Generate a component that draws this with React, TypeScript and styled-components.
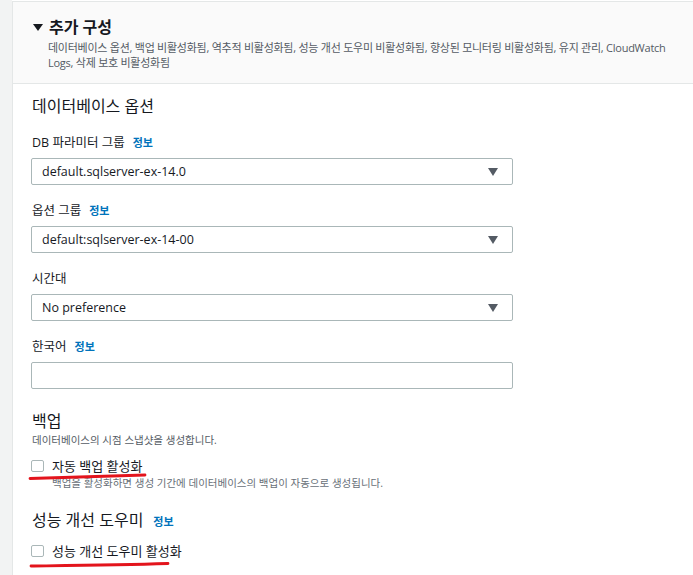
import React from "react";
import styled, { createGlobalStyle } from "styled-components";

const GlobalStyle = createGlobalStyle`
  html, body {
    margin: 0;
    padding: 0;
    background: #fff;
  }
  body {
    font-family: "Open Sans", "Noto Sans CJK KR", sans-serif;
    color: #16191f;
  }
`;

const Page = styled.div`
  display: flex;
  min-height: 575px;
  background: #fff;
`;

const Gutter = styled.div`
  width: 12px;
  flex-shrink: 0;
  background: #f2f3f3;
`;

const Panel = styled.section`
  flex: 1;
  border-left: 1px solid #e4e7e7;
  border-top: 1px solid #e4e7e7;
  margin-top: 1px;
`;

const Header = styled.div`
  background: #fafafa;
  border-bottom: 1px solid #e4e7e7;
  padding: 14px 0 14px 20px;
  height: 82px;
  box-sizing: border-box;
`;

const TitleRow = styled.div`
  display: flex;
  align-items: center;
  gap: 6px;
  height: 22px;
`;

const Caret = styled.span`
  width: 0;
  height: 0;
  border-left: 5px solid transparent;
  border-right: 5px solid transparent;
  border-top: 7px solid #16191f;
  margin-top: 1px;
`;

const Title = styled.h2`
  margin: 0;
  font-size: 16px;
  font-weight: 700;
  line-height: 20px;
`;

const HeaderDesc = styled.p`
  margin: 2px 0 0 15px;
  font-size: 11px;
  letter-spacing: -0.25px;
  line-height: 15px;
  color: #545b64;
  max-width: 624px;
`;

const Body = styled.div`
  padding: 12px 20px 0 18px;
  display: flex;
  flex-direction: column;
`;

const SectionTitle = styled.h3<{ $gap?: number }>`
  margin: 0 0 ${(p) => p.$gap ?? 18}px 0;
  font-size: 16px;
  font-weight: 400;
  line-height: 20px;
  display: flex;
  align-items: baseline;
  gap: 10px;
  padding-left: 1px;
`;

const Field = styled.div<{ $mb?: number }>`
  display: flex;
  flex-direction: column;
  margin-bottom: ${(p) => p.$mb ?? 17}px;
`;

const Label = styled.label`
  font-size: 12.5px;
  line-height: 18px;
  margin: 0 0 6px 1px;
  display: flex;
  align-items: baseline;
  gap: 8px;
`;

const Info = styled.a`
  font-size: 11px;
  font-weight: 700;
  color: #0073bb;
  text-decoration: none;
`;

const SelectBox = styled.div`
  width: 482px;
  height: 27px;
  box-sizing: border-box;
  border: 1px solid #aab7b8;
  border-radius: 2px;
  background: #fff;
  display: flex;
  align-items: center;
  justify-content: space-between;
  padding: 0 14px 0 10px;
  font-size: 12.5px;
  color: #16191f;
`;

const SelectArrow = styled.span`
  width: 0;
  height: 0;
  border-left: 5px solid transparent;
  border-right: 5px solid transparent;
  border-top: 8px solid #545b64;
`;

const TextInput = styled.input`
  width: 482px;
  height: 27px;
  box-sizing: border-box;
  border: 1px solid #aab7b8;
  border-radius: 2px;
  margin: 0;
  padding: 0 10px;
  font: inherit;
`;

const Desc = styled.p`
  margin: 0 0 8px 1px;
  font-size: 10.5px;
  line-height: 15px;
  color: #545b64;
`;

const CheckGroup = styled.div<{ $mb?: number }>`
  position: relative;
  margin-bottom: ${(p) => p.$mb ?? 0}px;
`;

const CheckRow = styled.label`
  display: flex;
  align-items: center;
  gap: 8px;
  height: 19px;
  font-size: 13px;
`;

const Box = styled.span`
  width: 13px;
  height: 12px;
  box-sizing: border-box;
  border: 1px solid #aab7b8;
  border-radius: 2px;
  background: #fff;
  flex-shrink: 0;
`;

const SubDesc = styled.p`
  margin: 1px 0 0 21px;
  font-size: 10.5px;
  line-height: 14px;
  color: #687078;
`;

const Mark = styled.svg`
  position: absolute;
  left: -2px;
  pointer-events: none;
  overflow: visible;
`;

const selects = [
  { label: "DB 파라미터 그룹", info: true, value: "default.sqlserver-ex-14.0" },
  { label: "옵션 그룹", info: true, value: "default:sqlserver-ex-14-00" },
  { label: "시간대", info: false, value: "No preference" },
];

export default function App() {
  return (
    <>
      <GlobalStyle />
      <Page>
        <Gutter />
        <Panel>
          <Header>
            <TitleRow>
              <Caret />
              <Title>추가 구성</Title>
            </TitleRow>
            <HeaderDesc>
              데이터베이스 옵션, 백업 비활성화됨, 역추적 비활성화됨, 성능 개선 도우미 비활성화됨, 향상된 모니터링 비활성화됨, 유지 관리, CloudWatch Logs, 삭제 보호 비활성화됨
            </HeaderDesc>
          </Header>
          <Body>
            <SectionTitle>데이터베이스 옵션</SectionTitle>
            {selects.map((s) => (
              <Field key={s.label}>
                <Label>
                  {s.label}
                  {s.info && <Info>정보</Info>}
                </Label>
                <SelectBox>
                  <span>{s.value}</span>
                  <SelectArrow />
                </SelectBox>
              </Field>
            ))}
            <Field $mb={22}>
              <Label>
                한국어 <Info>정보</Info>
              </Label>
              <TextInput />
            </Field>

            <SectionTitle $gap={2}>백업</SectionTitle>
            <Desc>데이터베이스의 시점 스냅샷을 생성합니다.</Desc>
            <CheckGroup $mb={20}>
              <CheckRow>
                <Box />
                자동 백업 활성화
              </CheckRow>
              <SubDesc>백업을 활성화하면 생성 기간에 데이터베이스의 백업이 자동으로 생성됩니다.</SubDesc>
              <Mark style={{ top: 17 }} width="120" height="8" viewBox="0 0 120 8">
                <path d="M1 5.5 C 30 4.5, 70 3.5, 116 2" stroke="#e3141c" strokeWidth="2.8" fill="none" strokeLinecap="round" />
              </Mark>
            </CheckGroup>

            <SectionTitle $gap={9}>
              성능 개선 도우미 <Info>정보</Info>
            </SectionTitle>
            <CheckGroup>
              <CheckRow>
                <Box />
                성능 개선 도우미 활성화
              </CheckRow>
              <Mark style={{ top: 20 }} width="142" height="8" viewBox="0 0 142 8">
                <path d="M2 5 C 40 4.5, 90 4, 139 2.5" stroke="#e3141c" strokeWidth="2.8" fill="none" strokeLinecap="round" />
              </Mark>
            </CheckGroup>
          </Body>
        </Panel>
      </Page>
    </>
  );
}
